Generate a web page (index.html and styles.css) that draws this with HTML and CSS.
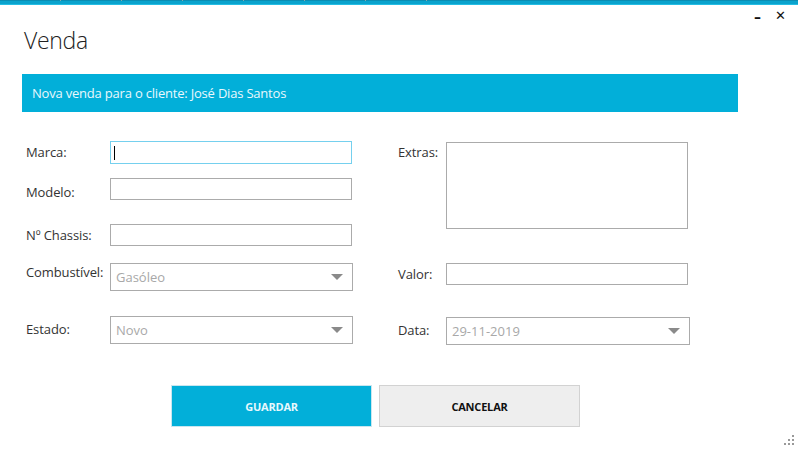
FILE: index.html
```html
<!DOCTYPE html>
<html lang="pt">
<head>
<meta charset="utf-8">
<title>Venda</title>
<link rel="stylesheet" href="styles.css">
</head>
<body>
<div class="window">
  <div class="topbar"><span></span><span></span><span></span><span></span><span></span><span></span><span></span></div>
  <div class="controls">
    <span class="min">&#8211;</span>
    <span class="close">&#10005;</span>
  </div>
  <h1 class="title">Venda</h1>
  <div class="banner">Nova venda para o cliente: José Dias Santos</div>

  <div class="form">
    <label class="lbl r1">Marca:</label>
    <div class="field r1 c2"><div class="input focus"><span class="caret"></span></div></div>

    <label class="lbl r1 c4 extras">Extras:</label>
    <div class="field c5 span3"><div class="textarea"></div></div>

    <label class="lbl r2 l-model">Modelo:</label>
    <div class="field r2 c2"><div class="input"></div></div>

    <label class="lbl r3 l-chassis">Nº Chassis:</label>
    <div class="field r3 c2"><div class="input"></div></div>

    <label class="lbl r4 l-comb">Combustível:</label>
    <div class="field r4 c2"><div class="combo"><span class="val">Gasóleo</span><span class="arrow"></span></div></div>

    <label class="lbl r4 c4 l-valor">Valor:</label>
    <div class="field r4 c5"><div class="input"></div></div>

    <label class="lbl r5 l-estado">Estado:</label>
    <div class="field r5 c2"><div class="combo"><span class="val">Novo</span><span class="arrow"></span></div></div>

    <label class="lbl r5 c4 l-data">Data:</label>
    <div class="field r5 c5"><div class="combo wide"><span class="val">29-11-2019</span><span class="arrow"></span></div></div>
  </div>

  <div class="actions">
    <button class="btn primary">GUARDAR</button>
    <button class="btn secondary">CANCELAR</button>
  </div>

  <div class="grip">
    <i class="d1"></i><i class="d2"></i><i class="d3"></i><i class="d4"></i><i class="d5"></i><i class="d6"></i>
  </div>
</div>
</body>
</html>
```

FILE: styles.css
```css
* { box-sizing: border-box; }
html, body { margin: 0; padding: 0; background: #fff; }
body {
  font-family: "Open Sans", "Noto Sans", sans-serif;
  color: #333;
  width: 798px;
  height: 450px;
  overflow: hidden;
}
.window { position: relative; width: 798px; height: 450px; background: #fff; }

.topbar {
  height: 5px;
  background: linear-gradient(#0a8db3 0, #0a8db3 1px, #0aa3cd 1px, #0aa3cd 4px, #25bde3 4px);
  display: flex;
}
.topbar span { flex: 0 0 auto; width: 1px; height: 1px; background: #8aa; margin-left: 60px; }

.controls {
  position: absolute;
  top: 7px;
  right: 12px;
  display: flex;
  gap: 14px;
  font-family: "DejaVu Sans", sans-serif;
  color: #111;
}
.controls .min { font-size: 14px; font-weight: bold; line-height: 20px; }
.controls .close { font-size: 13px; line-height: 18px; font-weight: bold; }

.title {
  margin: 0;
  padding: 20px 0 0 24px;
  height: 69px;
  font-size: 23px;
  font-weight: 300;
  color: #222;
  line-height: 30px;
  letter-spacing: -0.3px;
}

.banner {
  margin-left: 22px;
  width: 716px;
  height: 38px;
  background: #02afd9;
  color: #e9f8fd;
  font-size: 13px;
  line-height: 38px;
  padding-left: 10px;
  letter-spacing: -0.2px;
}

.form {
  margin-top: 29px;
  margin-left: 26px;
  display: grid;
  grid-template-columns: 84px 242px 46px 48px 242px;
  grid-template-rows: 37px 46px 39px 53px 28px;
}
.lbl {
  grid-column: 1;
  font-size: 13px;
  color: #333;
  line-height: 22px;
  white-space: nowrap;
  letter-spacing: -0.1px;
}
.r1 { grid-row: 1; }
.r2 { grid-row: 2; }
.r3 { grid-row: 3; }
.r4 { grid-row: 4; }
.r5 { grid-row: 5; }
.c2 { grid-column: 2; }
.c4 { grid-column: 4; }
.c5 { grid-column: 5; }
.span3 { grid-row: 1 / span 3; }

.l-model { padding-top: 3px; }
.l-chassis { padding-top: 0; }
.l-comb { margin-top: -2px; }
.l-valor { padding-top: 0; }
.l-estado { padding-top: 2px; }
.l-data { padding-top: 3px; }

.field { min-width: 0; }
.input {
  width: 242px;
  height: 22px;
  border: 1px solid #ababab;
  background: #fff;
  position: relative;
}
.input.focus { height: 23px; border-color: #75d0ee; }
.caret {
  position: absolute;
  left: 3px;
  top: 4px;
  width: 1px;
  height: 14px;
  background: #000;
}
.textarea {
  margin-top: 1px;
  width: 242px;
  height: 87px;
  border: 1px solid #ababab;
}
.combo {
  width: 243px;
  height: 28px;
  border: 1px solid #ababab;
  display: flex;
  align-items: center;
  justify-content: space-between;
  padding: 0 9px 0 5px;
  font-size: 13px;
  color: #a8a8a8;
}
.combo.wide { width: 244px; margin-top: 1px; }
.arrow {
  width: 0;
  height: 0;
  border-left: 6px solid transparent;
  border-right: 6px solid transparent;
  border-top: 6px solid #8a8a8a;
}

.actions {
  margin-top: 41px;
  margin-left: 171px;
  display: flex;
  gap: 7px;
}
.btn {
  width: 201px;
  height: 42px;
  font-family: "Open Sans", "Noto Sans", sans-serif;
  font-weight: 700;
  font-size: 11px;
  letter-spacing: -0.2px;
  border: 1px solid #d4d4d4;
  padding: 0;
}
.btn.primary { background: #02afd9; color: #e8f8fd; border-color: #c9e6ef; }
.btn.secondary { background: #eeeeee; color: #111; border-color: #d2d2d2; }

.grip {
  position: absolute;
  right: 4px;
  bottom: 5px;
  width: 10px;
  height: 10px;
}
.grip i { position: absolute; width: 2px; height: 2px; background: #999; }
.grip .d1 { right: 0; top: 0; }
.grip .d2 { right: 0; top: 4px; }
.grip .d3 { right: 4px; top: 4px; }
.grip .d4 { right: 0; top: 8px; }
.grip .d5 { right: 4px; top: 8px; }
.grip .d6 { right: 8px; top: 8px; }
```
